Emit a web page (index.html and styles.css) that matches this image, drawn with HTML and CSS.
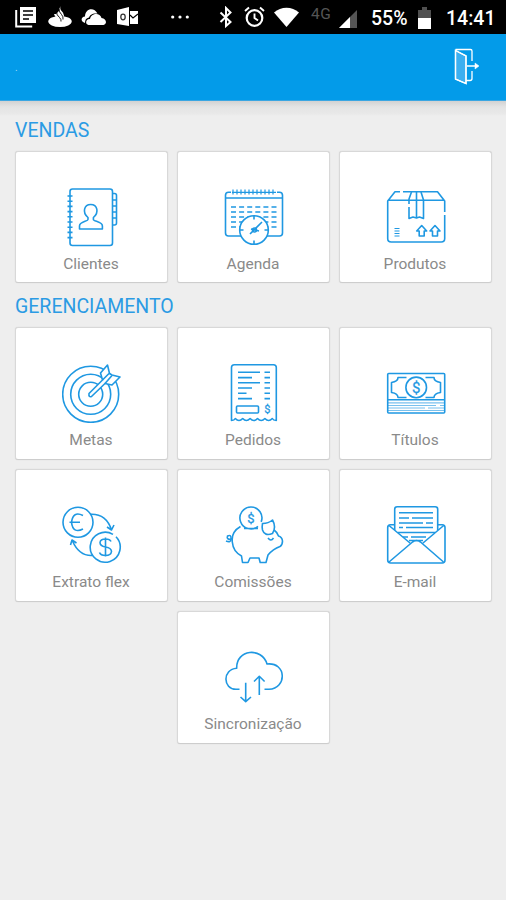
FILE: index.html
```html
<!DOCTYPE html>
<html lang="pt-BR">
<head>
    <meta charset="UTF-8">
    <meta name="viewport" content="width=device-width, initial-scale=1.0">
    <title>Vendas</title>
    <link rel="stylesheet" href="styles.css">
</head>
<body>
    <div class="status-bar">
        <svg class="news" width="21" height="22" viewBox="0 0 21 22"><path d="M5 1h16v16H5z" fill="#fff"/><path d="M1.200 4v16.600h16" fill="none" stroke="#fff" stroke-width="2"/><path d="M8 5h10M8 9h10M8 13h6" stroke="#000" stroke-width="1.600"/></svg>
        <svg class="flame" width="24" height="22" viewBox="0 0 24 22"><ellipse cx="12" cy="15.500" rx="11.700" ry="5.500" fill="#fff"/><path d="M6 8q1 4 8 8l2-6-4-6-4 4z" fill="#fff"/><path d="M12.500 0q-1 3 1.500 5.500T15.500 12l-1 2.500q0-3-2.500-5.500T12.500 0z" fill="#fff"/><path d="M8.500 6q0 3 3 5.500 2 2 1.500 4M11 3q0 3 2.500 5.500 2 2 1.500 5" fill="none" stroke="#000" stroke-width="0.900"/></svg>
        <svg class="drive" width="25" height="22" viewBox="0 0 25 22"><path d="M4 17c-5-1-4-6.500 0-6.500 0-8 9-10 12.500-3C11 7 9 9 8 11.500c-3 .5-4 2.500-4 5.500z" fill="#fff"/><path d="M7.500 19c-4-1-2.500-6.500 1.500-6 1-6 10-7 11.500-1 5 .5 6 6 2 7z" fill="#fff"/></svg>
        <svg class="mail" width="21" height="22" viewBox="0 0 21 22"><path d="M0 4l12-3v19L0 18z" fill="#fff"/><path d="M13 5h8v13h-8z" fill="#fff"/><path d="M13 9l3 3 5-4" fill="none" stroke="#000" stroke-width="1.200"/><ellipse cx="6" cy="11" rx="2.200" ry="2.800" fill="none" stroke="#333" stroke-width="1.300"/></svg>
        <svg class="dots" width="18" height="4" viewBox="0 0 18 4"><circle cx="1.700" cy="2" r="1.600" fill="#fff"/><circle cx="9" cy="2" r="1.600" fill="#fff"/><circle cx="16.300" cy="2" r="1.600" fill="#fff"/></svg>
        <svg class="bluetooth" width="14" height="22" viewBox="0 0 14 22"><path d="M1.500 6.500l10 9.500L7 20V2l4.500 4.500-10 9.500" fill="none" stroke="#fff" stroke-width="2"/></svg>
        <svg class="alarm" width="21" height="22" viewBox="0 0 21 22"><circle cx="10.500" cy="12" r="7.800" fill="none" stroke="#fff" stroke-width="2.200"/><path d="M10.500 7.500V12l3.500 2.500M1 5l4-3.500M20 5l-4-3.500" fill="none" stroke="#fff" stroke-width="1.900"/></svg>
        <svg class="wifi" width="25" height="20" viewBox="0 0 25 20"><path d="M0 5.500C7-1 18-1 25 5.500L12.500 20z" fill="#fff"/></svg>
        <span class="network">4G</span>
        <svg class="signal" width="18" height="18" viewBox="0 0 18 18"><path d="M0 18L18 0v18z" fill="#555"/><path d="M0 18L11 7v11z" fill="#fff"/></svg>
        <span class="percent">55%</span>
        <svg class="battery" width="13" height="22" viewBox="0 0 13 22"><path d="M0 3h4V0h5v3h4v8H0z" fill="#505050"/><path d="M0 11h13v11H0z" fill="#fff"/></svg>
        <span class="clock">14:41</span>
    </div>

    <header>
        <h1>.</h1>
        <svg class="logout" width="26" height="38" viewBox="0 0 26 38"><path d="M1.500 2.500l10.500 5.500v27.500L1.500 31z" fill="#3caff0"/><path d="M1.500 2.500v28.500l10.500 4.500V8z M1.500 1.500h15q1.500 0 1.500 1.500v10M18 23v7.500q0 2-2 2h-3.500M13 18h10"/><path d="M21 15l4 3-4 3z" fill="#fff" stroke-width="0.500"/></svg>
    </header>

    <main>
        <h2>VENDAS</h2>
        <div class="grid first">
            <a class="card">
                <svg class="icon" viewBox="0 0 60 60">
                    <rect x="8" y="2" width="42.500" height="56.500" rx="2.500"/>
                    <path d="M5.500 9h5M5.500 14.200h5M5.500 19.400h5M5.500 24.600h5M5.500 29.800h5M5.500 35h5M5.500 40.200h5M5.500 45.400h5M5.500 50.600h5"/>
                    <path d="M50.500 6.500h2q2 0 2 2V36q0 2-2 2h-2M50.500 13h4M50.500 19h4M50.500 25h4M50.500 31h4"/>
                    <path d="M26 32.500v-2c-6-5-4-13 2.700-13s8.700 8 2.700 13v2c0 2 9 2 9 6.500v3H17.500v-3c0-4.500 8.500-4.500 8.500-6.500z"/>
                </svg>
                <span>Clientes</span>
            </a>
            <a class="card">
                <svg class="icon" viewBox="0 0 60 60">
                    <path d="M7 5.300H4.500q-3 0-3 3V46q0 3 3 3H17M43 49h12.500q3 0 3-3V8.300q0-3-3-3H53M1.500 11h57"/>
                    <path d="M9 2.500v5M13 2.500v5M17 2.500v5M21 2.500v5M25 2.500v5M29 2.500v5M33 2.500v5M37 2.500v5M41 2.500v5M45 2.500v5M49 2.500v5M8 5.300h44" stroke-width="1.200"/>
                    <path d="M7 20h46M7 25h46M7 30h46M7 35h46M7 40h46" stroke-dasharray="5 3.100"/>
                    <circle cx="30" cy="43" r="14.300" fill="#fff"/>
                    <path d="M30 29v3.500M30 53.500V57M16 43h3.500M40.500 43H44M26 47l12-12M27 42l8 2"/>
                    <circle cx="30.500" cy="43" r="2"/>
                </svg>
                <span>Agenda</span>
            </a>
            <a class="card">
                <svg class="icon" viewBox="0 0 60 60">
                    <path d="M14 4.700H9L1.700 14v37.500q0 3.500 3.500 3.500h50q3.500 0 3.500-3.500V28M58.700 25V14l-7.200-9.300H17M2 13.200h56.500"/>
                    <path d="M25.500 5L23 12v5M23 20v11.500l4-1.500 3.500 1 3-1 4 1.500V13l-2.500-8M30.500 5v26"/>
                    <path d="M35.700 38.500l5 5.500h-2.500v5h-5v-5h-2.500zM49 38.500l5 5.500h-2.500v5h-5v-5H44z"/>
                    <path d="M8.500 41.500h5M8.500 44h5M8.500 46.500h5M8.500 49h5" stroke-width="1"/>
                </svg>
                <span>Produtos</span>
            </a>
        </div>

        <h2>GERENCIAMENTO</h2>
        <div class="grid">
            <a class="card">
                <svg class="icon" viewBox="0 0 60 60">
                    <circle cx="28.700" cy="31.300" r="28"/>
                    <circle cx="28.700" cy="31.300" r="20"/>
                    <circle cx="28.700" cy="31.300" r="12"/>
                    <path d="M27 30.500L40.500 17 38.500 10l7-8 2 8.500 2.500 1.500 8 2-8 8-7-1.500L29.500 33.500q-3 1-2.500-3z" fill="#fff"/>
                    <path d="M40.500 17L47 10.500M43 20.500l7-8"/>
                </svg>
                <span>Metas</span>
            </a>
            <a class="card">
                <svg class="icon" viewBox="0 0 60 60">
                    <path d="M7.500 57.500V4.500q0-2.800 2.800-2.800h39.200q2.800 0 2.800 2.800v53q-3 0-4-2-3.700 4-7.400 0-3.700 4-7.400 0-3.700 4-7.400 0-3.700 4-7.400 0-3.700 4-7.400 0-1 2-3.800 2z"/>
                    <path d="M14 9.300h22M40.500 9.300H46M14 14.600h14M40.500 14.600H46M14 19.800h22M40.500 19.800H46M14 25h14M40.500 25H46M14 30.300h8.500M40.500 30.300H46M14 35.600h14M40.500 35.600H46"/>
                    <rect x="12.500" y="43" width="22" height="7" rx="1"/>
                    <text x="43.300" y="50" font-size="11">$</text>
                </svg>
                <span>Pedidos</span>
            </a>
            <a class="card">
                <svg class="icon" viewBox="0 0 60 60">
                    <rect x="1.700" y="10.500" width="57" height="39.500" rx="1"/>
                    <path d="M1.700 36.700h57"/>
                    <path d="M2 39.800h56M2 42.500h48M54 42.500h5M2 45h37M42 45h16M2 47.500h56" stroke-width="1.200" opacity=".6"/>
                    <path d="M20.500 14.500h-8.500q0 4-6.500 5v10q6.500 1 6.500 5h8.500M39.500 14.500H48q0 4 6.500 5v10q-6.500 1-6.500 5h-8.500"/>
                    <circle cx="30.200" cy="24.400" r="10.300"/>
                    <text x="30.200" y="29.800" font-size="15">$</text>
                </svg>
                <span>Títulos</span>
            </a>
            <a class="card">
                <svg class="icon" viewBox="0 0 60 60">
                    <circle cx="16" cy="17.300" r="15"/>
                    <path d="M21 10.500q-10-5-11.500 6.800Q11 29 21 24M7.500 17.300H18"/>
                    <path d="M54 31.800a15 15 0 1 1-3-2.400"/>
                    <path d="M49 36.500q-1-2.500-5.500-2.500-5 0-5.500 3.500 0 3.500 5.500 4.500 6 1 6 4.500-.5 4-6 4-5 0-6-3M43.500 32.500v19"/>
                    <path d="M28 9.300q16-1 21.500 15.500M45 22l4.500 3 2.500-5M30 50.500Q17 51 10.500 36M8.500 40l1.500-5 4.500 3"/>
                </svg>
                <span>Extrato flex</span>
            </a>
            <a class="card">
                <svg class="icon" viewBox="0 0 60 60">
                    <path d="M34 21.400a11 11 0 1 1 3.200-4.500M20 23.500h14"/>
                    <text x="27" y="17.500" font-size="13">$</text>
                    <path d="M16.500 21.500Q7 27 8.300 37c.5 6 3.500 11 9.200 14l1 6.500h5.500l2-4.500h9l1.200 4.500h5.800L44 50q5-6 12-8.500 2.500-1.500 2.500-5.500-.5-4-4-5-1.500-4-5-6.500"/>
                    <path d="M38.500 18.500q6 0 10-3.500 4 7 0 13.500-8 3-10-3.500-.7-3 0-6.500zM44 33q3 4 5.500 0" fill="#fff"/>
                    <path d="M8 34q-6 1-4.500-3 4-2 3.500 3 0 4-5 2"/>
                </svg>
                <span>Comissões</span>
            </a>
            <a class="card">
                <svg class="icon" viewBox="0 0 60 60">
                    <path d="M8.700 25V4.200q0-2.500 2.500-2.500h38q2.500 0 2.500 2.500V25"/>
                    <path d="M13 7.700h34M13 13h10M26 13h21M13 18h24M40 18h7M13 22.500h4M20 22.500h27M12 27.500h37M17 32h5M25 32h15M23 35.500h14"/>
                    <path d="M8.700 19.700H4.500q-2.800 0-2.800 2.800V55q0 3 3 3h51.500q2.800 0 2.800-3V22.500q0-2.800-2.800-2.800h-4.500"/>
                    <path d="M3 20.500L24 38M57.700 20.500L37 38M3 57l23.500-20q4-3 8 0l23 20"/>
                </svg>
                <span>E-mail</span>
            </a>
            <a class="card last">
                <svg class="icon" viewBox="0 0 60 60">
                    <path d="M15.500 42.300H12c-13 0-14-20 .7-21C12 2 38 0 43 17c20-2 20 24.500 2 25.300h-4.500"/>
                    <path d="M21.700 35.700v19M16.500 50l5.200 4.700 5.300-4.700M35.300 48V29.500M30 34.500l5.300-5.200 5.300 5.200"/>
                </svg>
                <span>Sincronização</span>
            </a>
        </div>
    </main>
</body>
</html>
```

FILE: styles.css
```css
* {
    box-sizing: border-box;
}
body {
    font-family: Roboto, "Liberation Sans", sans-serif;
    background-color: #eee;
    margin: 0;
    min-height: 900px;
}
.status-bar {
    display: flex;
    align-items: center;
    height: 34px;
    padding-left: 15px;
    background-color: #000;
    color: #fff;
    white-space: nowrap;
}
.status-bar svg,
.status-bar span {
    flex: none;
}
.flame {
    margin-left: 12px;
}
.drive {
    margin-left: 9px;
}
.mail {
    margin-left: 11px;
}
.dots {
    margin-left: 33px;
}
.bluetooth {
    margin-left: 30px;
}
.alarm {
    margin-left: 11px;
}
.wifi {
    margin-left: 9px;
}
.network {
    width: 28px;
    margin: 0 0 6px 12px;
    font-size: 15.5px;
    letter-spacing: 0.5px;
    color: #555;
}
.signal {
    margin-top: 3px;
}
.percent {
    width: 46px;
    margin-left: 14px;
    font-size: 19.5px;
    font-weight: 500;
}
.clock {
    margin-left: 15px;
    font-size: 19.5px;
    font-weight: 500;
}
.percent,
.clock {
    padding-top: 2px;
}
.battery {
    margin-left: 1px;
    margin-top: 2px;
}
header {
    display: flex;
    align-items: center;
    justify-content: space-between;
    height: 67px;
    padding: 0 26px 0 15px;
    background-color: #039be9;
    border-bottom: 1px solid #3aa6e2;
}
header h1 {
    margin: 0;
    font-size: 10px;
    font-weight: 400;
    color: #a5dbf8;
}
.logout {
    fill: none;
    stroke: #fff;
    stroke-width: 1.3;
}
main {
    padding: 15px 14px 0 15px;
    background: linear-gradient(#d2d2d2, #e4e4e4 6px, #e9e9e9 13px, #eee 15px);
}
h2 {
    margin: 0;
    height: 35px;
    line-height: 30px;
    font-size: 19.5px;
    font-weight: 400;
    color: #2b9be4;
}
.grid {
    display: grid;
    grid-template-columns: repeat(3, 153px);
    grid-auto-rows: 133px;
    gap: 9px;
}
.grid.first {
    grid-auto-rows: 132px;
    margin-bottom: 9px;
}
.card {
    display: flex;
    flex-direction: column;
    align-items: center;
    padding-top: 35px;
    background-color: #fff;
    border: 1px solid #d8d8d8;
    border-bottom-color: #cdcdcd;
    border-radius: 3px;
    box-shadow: 0 0 1px #ccc;
}
.card.last {
    grid-column: 2;
}
.card span {
    margin-top: 6px;
    padding-right: 1px;
    line-height: 22px;
    font-size: 15.5px;
    color: #8a8a8a;
}
.icon {
    width: 60px;
    height: 60px;
    fill: none;
    stroke: #1f98e2;
    stroke-width: 1.6;
    stroke-linejoin: round;
}
.icon text {
    fill: #1f98e2;
    stroke-width: 0.3;
    text-anchor: middle;
}
```
